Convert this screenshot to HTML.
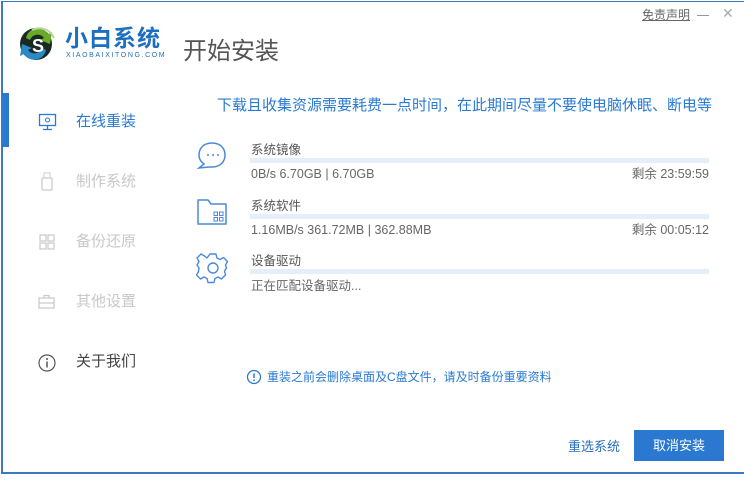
<!DOCTYPE html><html><head><meta charset="utf-8"><style>
*{margin:0;padding:0;box-sizing:border-box}
body{width:744px;height:480px;background:#fff;position:relative;overflow:hidden;font-family:"Liberation Sans","Noto Sans CJK SC",sans-serif}
.a{position:absolute;white-space:nowrap}
.win{position:absolute;left:1px;top:1px;width:743px;height:473px;border:2px solid #3a7bc0;border-right:none;border-top-width:1px}
.bar{position:absolute;left:250px;width:459px;height:5px;background:#e6eef8}
.menu{font-size:15px;color:#c8c8c8;line-height:20px}
.g{font-size:12.5px;color:#666;line-height:16px}
</style></head><body>
<div class="win"></div>
<div class="a" style="left:2px;top:93px;width:7px;height:54px;background:#2a7ad2"></div>
<svg class="a" style="left:18px;top:20px" width="40" height="44" viewBox="0 0 40 44">
<circle cx="18" cy="24" r="16" fill="#1a2a20"/>
<path d="M8 18 A12 12 0 0 1 30 14 L34 12 L32 24 L22 20 L26 18 A8 8 0 0 0 12 20Z" fill="#6aaa2a"/>
<path d="M28 30 A12 12 0 0 1 6 34 L2 36 L4 24 L14 28 L10 30 A8 8 0 0 0 24 28Z" fill="#2a8ac8"/>
<path d="M14 10 A16 16 0 0 1 36 18" stroke="#b8d8a0" stroke-width="2" fill="none"/>
<text x="14" y="32" font-size="18" font-weight="bold" fill="#fff" font-family="Liberation Sans">S</text>
</svg>
<div class="a" style="left:65px;top:24px;font-size:23px;line-height:28px;color:#1e6fbf;font-weight:bold;letter-spacing:1px">小白系统</div>
<div class="a" style="left:66px;top:52px;font-size:7px;line-height:8px;color:#1e6fbf;letter-spacing:1.6px">XIAOBAIXITONG.COM</div>
<div class="a" style="left:183px;top:37px;font-size:24px;line-height:30px;color:#555">开始安装</div>
<div class="a" style="left:642px;top:7px;font-size:12px;line-height:16px;color:#666;text-decoration:underline">免责声明</div>
<div class="a" style="left:697px;top:15px;width:12px;height:1px;background:#999"></div>
<div class="a" style="left:722px;top:5px;font-size:14px;line-height:16px;color:#aaa">✕</div>

<svg class="a" style="left:38px;top:113px" width="20" height="18"><rect x="1.5" y="1.5" width="16" height="11" fill="none" stroke="#2a7ad2" stroke-width="1.3"/><circle cx="9.5" cy="7" r="2" fill="none" stroke="#2a7ad2"/><path d="M9.5 13v3M5 16.5h9" stroke="#2a7ad2" stroke-width="1.3"/></svg>
<div class="a menu" style="left:76px;top:112px;color:#2a7ad2">在线重装</div>
<svg class="a" style="left:40px;top:172px" width="14" height="20"><rect x="2" y="6" width="10" height="12" rx="1" fill="none" stroke="#ccc" stroke-width="1.3"/><rect x="4" y="1" width="6" height="5" fill="none" stroke="#ccc"/></svg>
<div class="a menu" style="left:76px;top:172px">制作系统</div>
<svg class="a" style="left:39px;top:234px" width="18" height="18"><rect x="1" y="1" width="6" height="6" fill="none" stroke="#ccc" stroke-width="1.3"/><rect x="9" y="1" width="6" height="6" fill="none" stroke="#ccc" stroke-width="1.3"/><rect x="1" y="9" width="6" height="6" fill="none" stroke="#ccc" stroke-width="1.3"/><rect x="9" y="9" width="6" height="6" fill="none" stroke="#ccc" stroke-width="1.3"/></svg>
<div class="a menu" style="left:76px;top:232px">备份还原</div>
<svg class="a" style="left:38px;top:294px" width="18" height="16"><rect x="1" y="4" width="15" height="10" fill="none" stroke="#ccc" stroke-width="1.3"/><path d="M6 4V1.5h5V4M1 9h15" stroke="#ccc" stroke-width="1.3" fill="none"/></svg>
<div class="a menu" style="left:76px;top:292px">其他设置</div>
<svg class="a" style="left:38px;top:354px" width="18" height="18"><circle cx="9" cy="9" r="8" fill="none" stroke="#555" stroke-width="1.2"/><path d="M9 7.5v6" stroke="#555" stroke-width="1.5"/><circle cx="9" cy="5" r="1" fill="#555"/></svg>
<div class="a menu" style="left:76px;top:352px;color:#444">关于我们</div>

<div class="a" style="left:217px;top:96px;font-size:15px;line-height:20px;color:#2a7ad2">下载且收集资源需要耗费一点时间，在此期间尽量不要使电脑休眠、断电等</div>

<svg class="a" style="left:195px;top:140px" width="34" height="32"><path d="M17 3C9 3 4 8 4 15c0 4 2 7 5 9l-5 4 10-1c1 0 2 0 3 0 8 0 13-5 13-12S25 3 17 3z" fill="none" stroke="#4a8ad8" stroke-width="1.5"/><circle cx="13" cy="15" r="1" fill="#4a8ad8"/><circle cx="18" cy="15" r="1" fill="#4a8ad8"/><circle cx="23" cy="15" r="1" fill="#4a8ad8"/></svg>
<div class="a g" style="left:251px;top:142px;color:#555">系统镜像</div>
<div class="bar" style="top:158px"></div>
<div class="a g" style="left:251px;top:166px">0B/s 6.70GB | 6.70GB</div>
<div class="a g" style="right:35px;top:166px">剩余 23:59:59</div>

<svg class="a" style="left:196px;top:196px" width="34" height="32"><path d="M2 4h10l3 4h15v20H2z" fill="none" stroke="#4a8ad8" stroke-width="1.5" stroke-linejoin="round"/><rect x="18" y="16" width="3.5" height="3.5" fill="none" stroke="#4a8ad8"/><rect x="23.5" y="16" width="3.5" height="3.5" fill="none" stroke="#4a8ad8"/><rect x="18" y="21.5" width="3.5" height="3.5" fill="none" stroke="#4a8ad8"/><rect x="23.5" y="21.5" width="3.5" height="3.5" fill="none" stroke="#4a8ad8"/></svg>
<div class="a g" style="left:251px;top:198px;color:#555">系统软件</div>
<div class="bar" style="top:214px"></div>
<div class="a g" style="left:251px;top:222px">1.16MB/s 361.72MB | 362.88MB</div>
<div class="a g" style="right:35px;top:222px">剩余 00:05:12</div>

<svg class="a" style="left:196px;top:251px" width="34" height="34" viewBox="0 0 34 34"><path d="M14 3h6l1 4 3 1.5 3.5-2 4 4-2 3.5L30.5 17l-2 3 1 4-4 4-3.5-2-3 1.5-1 4h-6l-1-4-3-1.5-3.5 2-4-4 2-3.5L3 17l-2-3 2-3.5-2-3.5 4-4 3.5 2L11 7z" fill="none" stroke="#4a8ad8" stroke-width="1.4" stroke-linejoin="round"/><circle cx="17" cy="17" r="5" fill="none" stroke="#4a8ad8" stroke-width="1.4"/></svg>
<div class="a g" style="left:251px;top:253px;color:#555">设备驱动</div>
<div class="bar" style="top:269px"></div>
<div class="a g" style="left:251px;top:278px">正在匹配设备驱动...</div>

<svg class="a" style="left:246px;top:369px" width="16" height="16"><circle cx="8" cy="8" r="6.5" fill="none" stroke="#2a7ad2" stroke-width="1.3"/><path d="M8 4.5v4.5" stroke="#2a7ad2" stroke-width="1.5"/><circle cx="8" cy="11.3" r="0.9" fill="#2a7ad2"/></svg>
<div class="a" style="left:267px;top:369px;font-size:12px;line-height:16px;color:#2a7ad2">重装之前会删除桌面及C盘文件，请及时备份重要资料</div>

<div class="a" style="left:568px;top:438px;font-size:13px;line-height:18px;color:#2a6fbd">重选系统</div>
<div class="a" style="left:634px;top:430px;width:90px;height:31px;background:#2a78d0;color:#fff;font-size:13px;text-align:center;line-height:31px">取消安装</div>
</body></html>
